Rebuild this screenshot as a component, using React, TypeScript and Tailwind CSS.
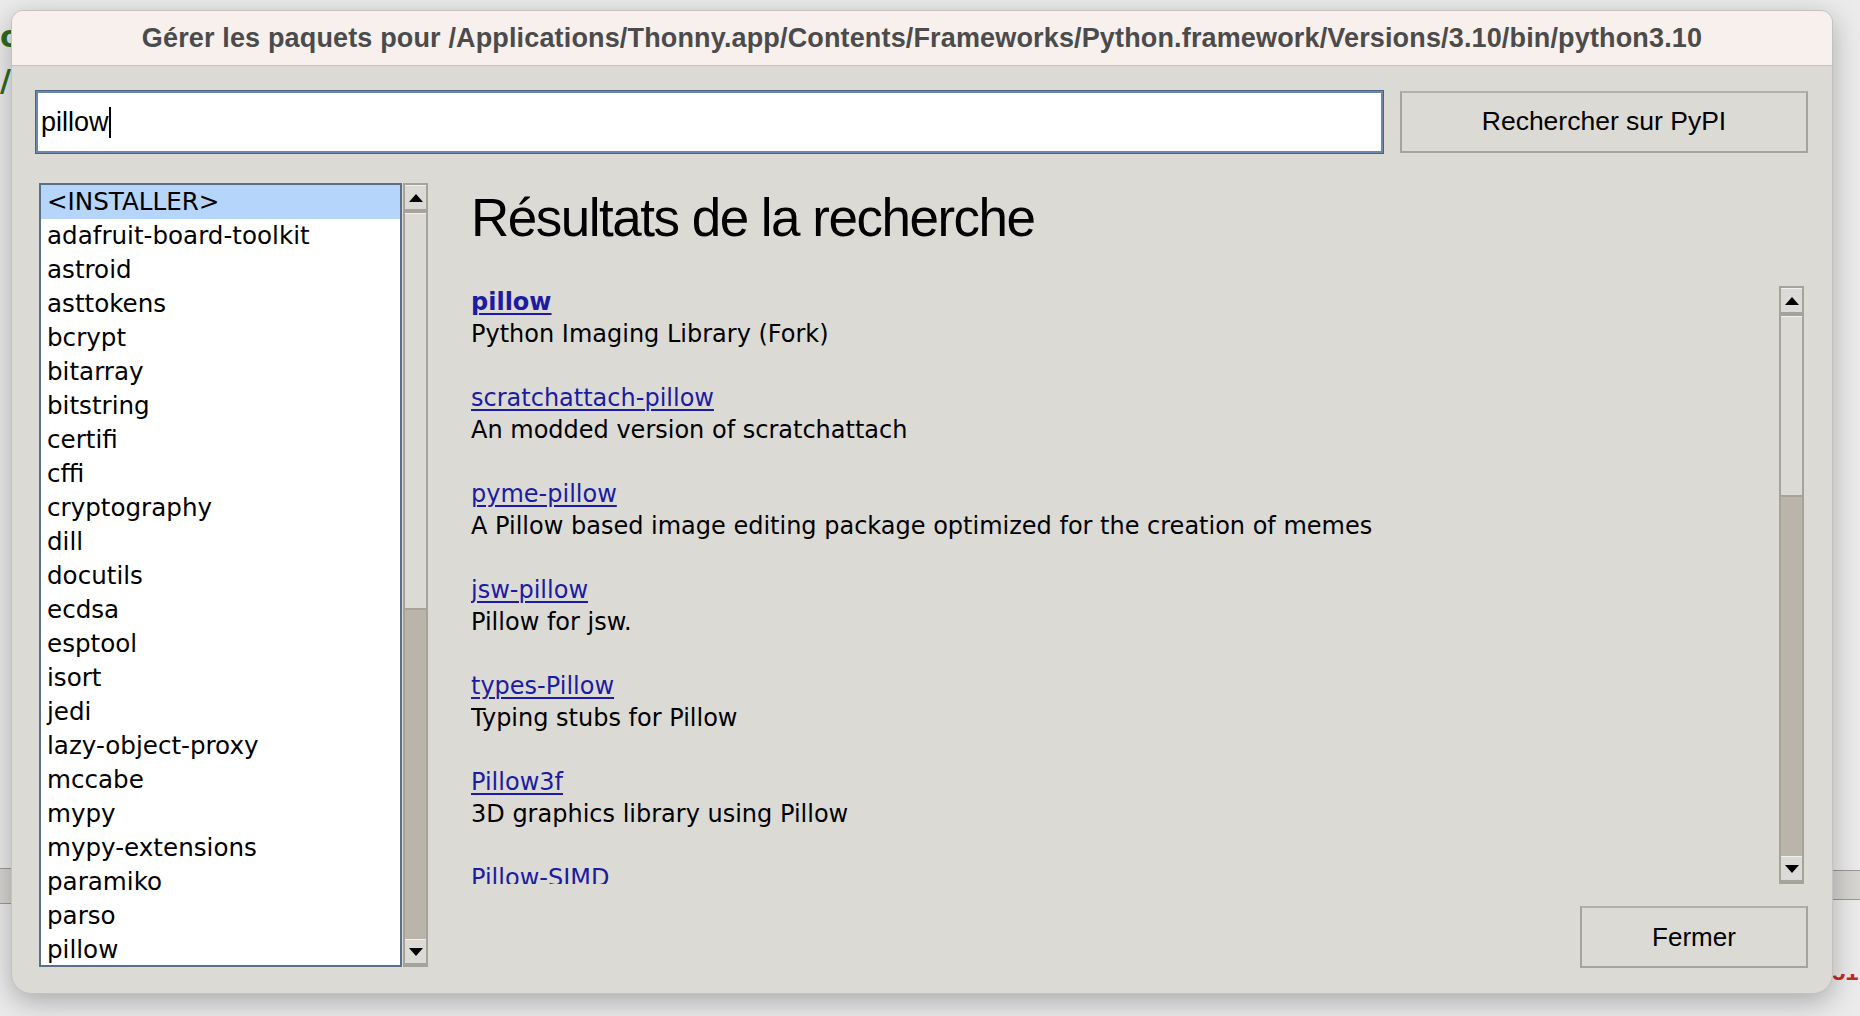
import React from 'react';

const installed = [
  '<INSTALLER>', 'adafruit-board-toolkit', 'astroid', 'asttokens', 'bcrypt', 'bitarray',
  'bitstring', 'certifi', 'cffi', 'cryptography', 'dill', 'docutils', 'ecdsa', 'esptool',
  'isort', 'jedi', 'lazy-object-proxy', 'mccabe', 'mypy', 'mypy-extensions', 'paramiko',
  'parso', 'pillow',
];

const results = [
  { name: 'pillow', desc: 'Python Imaging Library (Fork)', bold: true },
  { name: 'scratchattach-pillow', desc: 'An modded version of scratchattach' },
  { name: 'pyme-pillow', desc: 'A Pillow based image editing package optimized for the creation of memes' },
  { name: 'jsw-pillow', desc: 'Pillow for jsw.' },
  { name: 'types-Pillow', desc: 'Typing stubs for Pillow' },
  { name: 'Pillow3f', desc: '3D graphics library using Pillow' },
  { name: 'Pillow-SIMD', desc: '' },
];

function Arrow({ up }: { up?: boolean }) {
  return (
    <div className="h-[26px] shrink-0 bg-[#dcdad5] border-t border-t-[#f2f1ee] border-b-2 border-b-[#a6a39b] flex items-center justify-center">
      <svg width="14" height="8" viewBox="0 0 14 8">
        {up ? <polygon points="7,0 14,8 0,8" fill="#000" /> : <polygon points="0,0 14,0 7,8" fill="#000" />}
      </svg>
    </div>
  );
}

function Scrollbar({ thumb, className }: { thumb: number; className: string }) {
  return (
    <div className={`w-[25px] shrink-0 flex flex-col border-2 border-[#a6a39b] bg-[#b9b5ab] ${className}`}>
      <Arrow up />
      <div className="h-[2px] shrink-0 bg-[#a6a39b]" />
      <div
        className="shrink-0 bg-[#dcdad5] border-t border-t-[#f2f1ee] border-b-2 border-b-[#a6a39b]"
        style={{ height: thumb }}
      />
      <div className="flex-1" />
      <Arrow />
    </div>
  );
}

export default function App() {
  return (
    <div className="relative w-[1860px] h-[1016px] overflow-hidden bg-[#ebebeb] font-['Liberation_Sans',sans-serif]">
      {/* bits of the windows behind */}
      <div className="absolute left-0 top-[22px] text-[30px] leading-none font-bold text-[#2f6b1e] font-['DejaVu_Sans',sans-serif]">o</div>
      <div className="absolute left-0 top-[66px] text-[30px] leading-none font-bold text-[#2f6b1e] font-['DejaVu_Sans',sans-serif]">/</div>
      <div className="absolute left-0 top-[868px] w-[20px] h-[36px] border-y border-[#9c9a96] bg-[#d6d5d2]" />
      <div className="absolute right-0 top-[870px] w-[40px] h-[30px] border-y border-[#9c9a96] bg-[#d6d5d2]" />
      <div className="absolute left-[1832px] top-[974px] h-[10px] overflow-hidden">
        <div className="-mt-[14px] text-[24px] leading-none font-bold text-[#c42a1f]">51</div>
      </div>

      <div className="relative ml-[11px] mt-[10px] w-[1822px] h-[984px] flex flex-col bg-[#dcdad5] rounded-t-[12px] rounded-b-[20px] shadow-[0_8px_28px_rgba(0,0,0,0.28)] border border-[#c4c2be] overflow-hidden">
        {/* title bar */}
        <div className="h-[55px] shrink-0 flex items-center justify-center bg-[#f7f0ed] border-b border-[#c3c1bd] text-[27px] font-bold text-[#4b4b4b] tracking-[0.15px] whitespace-nowrap">
          Gérer les paquets pour /Applications/Thonny.app/Contents/Frameworks/Python.framework/Versions/3.10/bin/python3.10
        </div>

        <div className="flex-1 flex flex-col px-[24px] pt-[25px]">
          {/* search row */}
          <div className="flex gap-[17px] h-[62px]">
            <div className="flex-1 flex items-center bg-white border-2 border-[#6a88ad] outline outline-1 outline-[#4d6480] pl-[3px] text-[27px] text-black">
              pillow<span className="w-[2px] h-[31px] bg-black" />
            </div>
            <button className="w-[408px] flex items-center justify-center bg-[#dcdad5] border-2 border-[#a6a39b] border-t-[#b3b0a9] text-[26.5px] text-black">
              Rechercher sur PyPI
            </button>
          </div>

          <div className="flex mt-[30px]">
            {/* installed packages */}
            <div className="flex ml-[3px] h-[784px]">
              <div className="w-[363px] h-full bg-white border-2 border-[#5b6f88] overflow-hidden font-['DejaVu_Sans',sans-serif] text-[24.6px] text-black">
                {installed.map((p, i) => (
                  <div key={p} className={`h-[34px] leading-[34px] pl-[6px] whitespace-nowrap ${i === 0 ? 'bg-[#b6d5fa]' : ''}`}>
                    {p}
                  </div>
                ))}
              </div>
              <Scrollbar thumb={397} className="ml-[1px] h-full" />
            </div>

            {/* search results */}
            <div className="flex-1 flex flex-col pl-[43px]">
              <h1 className="mt-[7px] h-[56px] text-[53px] leading-[56px] font-normal tracking-[-1.5px] text-black">
                Résultats de la recherche
              </h1>
              <div className="flex mt-[40px] h-[598px]">
                <div className="flex-1 overflow-hidden font-['DejaVu_Sans',sans-serif] text-[24px] leading-[32px] text-black">
                  {results.map(r => (
                    <div key={r.name} className="pb-[32px]">
                      <div>
                        <span className={`text-[#1b1ba3] underline decoration-2 underline-offset-[3px] ${r.bold ? 'font-bold' : ''}`}>
                          {r.name}
                        </span>
                      </div>
                      {r.desc && <div className="whitespace-nowrap">{r.desc}</div>}
                    </div>
                  ))}
                </div>
                <Scrollbar thumb={181} className="mr-[4px] h-full" />
              </div>
              <div className="flex justify-end mt-[22px]">
                <button className="w-[228px] h-[62px] flex items-center justify-center bg-[#dcdad5] border-2 border-[#a6a39b] border-t-[#b3b0a9] text-[26px] text-black">
                  Fermer
                </button>
              </div>
            </div>
          </div>
        </div>
      </div>
    </div>
  );
}
